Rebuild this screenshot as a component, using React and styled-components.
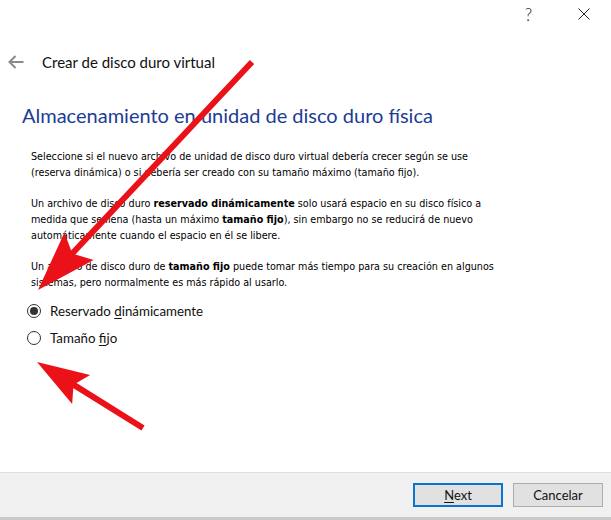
import React from "react";
import styled, { createGlobalStyle } from "styled-components";

const Global = createGlobalStyle`
  html, body { margin: 0; padding: 0; background: #ffffff; }
  * { box-sizing: border-box; }
`;

const Window = styled.div`
  position: relative;
  width: 611px;
  height: 520px;
  background: #ffffff;
  display: flex;
  flex-direction: column;
  overflow: hidden;
  font-family: Lato, "Noto Sans", sans-serif;
  color: #000;
`;

const TitleBar = styled.div`
  height: 28px;
  display: flex;
  justify-content: flex-end;
  align-items: center;
  padding-right: 21px;
  gap: 46px;
`;

const HelpGlyph = styled.span`
  font-family: Lato, sans-serif;
  font-weight: 300;
  font-size: 17px;
  color: #222;
  line-height: 1;
`;

const CloseIcon = styled.svg`
  width: 12px;
  height: 12px;
  display: block;
`;

const Header = styled.div`
  margin-top: 22px;
  height: 24px;
  display: flex;
  align-items: center;
  padding-left: 8px;
  gap: 18px;
`;

const BackIcon = styled.svg`
  width: 16px;
  height: 14px;
  display: block;
`;

const WizardTitle = styled.div`
  font-size: 15px;
  color: #111;
`;

const Heading = styled.h1`
  margin: 27px 0 0 22px;
  font-family: Lato, sans-serif;
  font-weight: 400;
  font-size: 20px;
  line-height: 28px;
  color: #1c3c94;
`;

const Body = styled.div`
  margin-top: 20px;
  padding-left: 31px;
  display: flex;
  flex-direction: column;
  gap: 15px;
`;

const Para = styled.p`
  margin: 0;
  font-family: "DejaVu Sans Condensed", "DejaVu Sans", sans-serif;
  font-size: 10.7px;
  line-height: 16px;
  color: #000;
  white-space: nowrap;
  b { font-weight: 700; }
`;

const Options = styled.div`
  margin-top: 10px;
  padding-left: 27px;
  display: flex;
  flex-direction: column;
  gap: 7px;
`;

const OptionRow = styled.label`
  height: 20px;
  display: flex;
  align-items: center;
  gap: 9px;
  font-family: Lato, sans-serif;
  font-size: 13.3px;
  color: #111;
  u { text-decoration-thickness: 1px; text-underline-offset: 2px; }
`;

const Radio = styled.span`
  width: 14px;
  height: 14px;
  border-radius: 50%;
  border: 1px solid #333;
  background: #fff;
  display: flex;
  align-items: center;
  justify-content: center;
  &::after {
    content: "";
    width: 8px;
    height: 8px;
    border-radius: 50%;
    background: ${(p) => (p.$checked ? "#333" : "transparent")};
  }
`;

const Footer = styled.div`
  margin-top: auto;
  height: 48px;
  background: #f0f0f0;
  border-top: 1px solid #dfdfdf;
  border-bottom: 3px solid #c9c9c9;
  display: flex;
  justify-content: flex-end;
  align-items: flex-start;
  padding: 10px 8px 0 0;
  gap: 10px;
`;

const Button = styled.button`
  width: 90px;
  height: 24px;
  padding: 0;
  background: #e1e1e1;
  border: ${(p) => (p.$primary ? "2px solid #0a74d0" : "1px solid #adadad")};
  font-family: Lato, sans-serif;
  font-size: 13px;
  color: #111;
  display: flex;
  align-items: center;
  justify-content: center;
  u { text-decoration-thickness: 1px; text-underline-offset: 2px; }
`;

const Overlay = styled.svg`
  position: absolute;
  left: 0;
  top: 0;
  width: 611px;
  height: 520px;
  pointer-events: none;
`;

const RED = "#ea1218";

function Arrow({ tail, tip, len = 55, half = 18, notch = 46, width = 6 }) {
  const dx = tail[0] - tip[0];
  const dy = tail[1] - tip[1];
  const L = Math.hypot(dx, dy);
  const bx = dx / L;
  const by = dy / L;
  const px = -by;
  const py = bx;
  const base = [tip[0] + bx * len, tip[1] + by * len];
  const w1 = [base[0] + px * half, base[1] + py * half];
  const w2 = [base[0] - px * half, base[1] - py * half];
  const n = [tip[0] + bx * notch, tip[1] + by * notch];
  const pts = [tip, w1, n, w2].map((p) => p.join(",")).join(" ");
  return (
    <g>
      <line
        x1={tail[0]}
        y1={tail[1]}
        x2={n[0] - bx * 2}
        y2={n[1] - by * 2}
        stroke={RED}
        strokeWidth={width}
      />
      <polygon points={pts} fill={RED} />
    </g>
  );
}

export default function App() {
  return (
    <Window>
      <Global />
      <TitleBar>
        <HelpGlyph>?</HelpGlyph>
        <CloseIcon viewBox="0 0 12 12">
          <path d="M0.5 0.5 L11.5 11.5 M11.5 0.5 L0.5 11.5" stroke="#222" strokeWidth="1" fill="none" />
        </CloseIcon>
      </TitleBar>
      <Header>
        <BackIcon viewBox="0 0 16 14">
          <path d="M1.5 7 H15.5 M7.5 1 L1.5 7 L7.5 13" stroke="#8a8a8a" strokeWidth="2" fill="none" />
        </BackIcon>
        <WizardTitle>Crear de disco duro virtual</WizardTitle>
      </Header>
      <Heading>Almacenamiento en unidad de disco duro física</Heading>
      <Body>
        <Para>
          Seleccione si el nuevo archivo de unidad de disco duro virtual debería crecer según se use
          <br />
          (reserva dinámica) o si debería ser creado con su tamaño máximo (tamaño fijo).
        </Para>
        <Para>
          Un archivo de disco duro <b>reservado dinámicamente</b> solo usará espacio en su disco físico a
          <br />
          medida que se llena (hasta un máximo <b>tamaño fijo</b>), sin embargo no se reducirá de nuevo
          <br />
          automáticamente cuando el espacio en él se libere.
        </Para>
        <Para>
          Un archivo de disco duro de <b>tamaño fijo</b> puede tomar más tiempo para su creación en algunos
          <br />
          sistemas, pero normalmente es más rápido al usarlo.
        </Para>
      </Body>
      <Options>
        <OptionRow>
          <Radio $checked />
          <span>
            Reservado <u>d</u>inámicamente
          </span>
        </OptionRow>
        <OptionRow>
          <Radio />
          <span>
            Tamaño <u>f</u>ijo
          </span>
        </OptionRow>
      </Options>
      <Footer>
        <Button $primary>
          <span>
            <u>N</u>ext
          </span>
        </Button>
        <Button>Cancelar</Button>
      </Footer>
      <Overlay viewBox="0 0 611 520">
        <Arrow tail={[252, 62]} tip={[38, 290]} len={60} half={20} notch={50} />
        <Arrow tail={[143, 428]} tip={[37, 362]} len={52} half={17} notch={43} />
      </Overlay>
    </Window>
  );
}
